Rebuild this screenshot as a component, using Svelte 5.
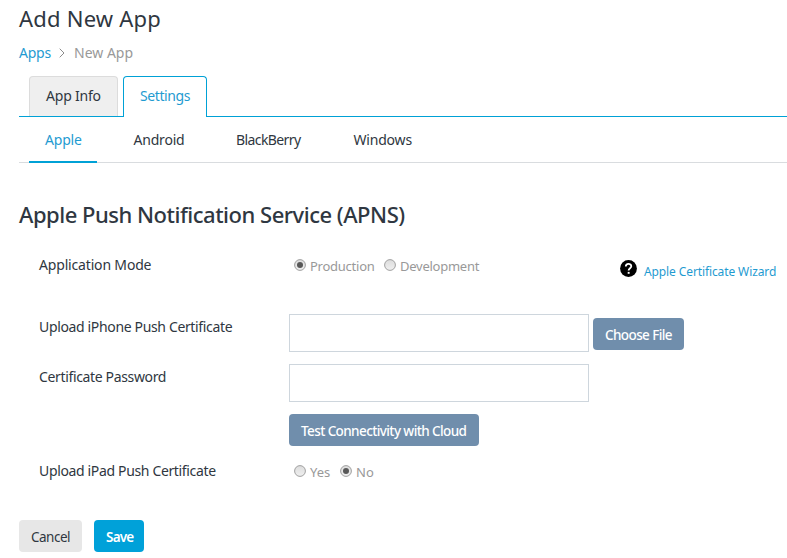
<script>
  let mode = $state('Production');
  let ipad = $state('No');
  let active = $state('Apple');
  const platforms = [
    { name: 'Apple', width: 68 },
    { name: 'Android', width: 82 },
    { name: 'BlackBerry', width: 97 },
    { name: 'Windows', width: 91 },
  ];
</script>

{#snippet radio(label, checked, select, cls)}
  <button class="radio {cls}" role="radio" aria-checked={checked} onclick={select}>
    <svg width="12" height="12" viewBox="0 0 12 12">
      <defs>
        <linearGradient id="face" x1="0" y1="0" x2="0" y2="1">
          <stop offset="0" stop-color="#dcdcdc" />
          <stop offset="1" stop-color="#f0f0f0" />
        </linearGradient>
      </defs>
      <circle cx="6" cy="6" r="5.4" fill="url(#face)" stroke="#a0a0a0" stroke-width="1" />
      {#if checked}<circle cx="6" cy="6" r="3" fill="#585858" />{/if}
    </svg>
    <span>{label}</span>
  </button>
{/snippet}

<main>
  <h1>Add New App</h1>
  <nav class="crumbs">
    <a href="#apps">Apps</a>
    <svg width="6" height="10" viewBox="0 0 6 10"><path d="M0.7 0.7 5 5 0.7 9.3" fill="none" stroke="#8c8c8c" /></svg>
    <span class="current">New App</span>
  </nav>

  <div class="tabs">
    <div class="tab info"><span>App Info</span></div>
    <div class="tab selected"><span>Settings</span></div>
  </div>

  <div class="platforms">
    {#each platforms as p}
      <button class="platform {p.name}" class:on={active === p.name} style="width:{p.width}px" onclick={() => (active = p.name)}>{p.name}</button>
    {/each}
  </div>

  <h2>Apple Push Notification Service (APNS)</h2>

  <div class="form">
    <div class="row mode">
      <span class="label">Application Mode</span>
      <div class="field radios">
        {@render radio('Production', mode === 'Production', () => (mode = 'Production'), 'prod')}
        {@render radio('Development', mode === 'Development', () => (mode = 'Development'), 'dev')}
      </div>
      <a class="wizard" href="#wizard">
        <svg width="17" height="17" viewBox="0 0 17 17">
          <circle cx="8.5" cy="8.5" r="8.4" fill="#000" />
          <path d="M5.8 6.5C5.8 3 11.3 3 11.3 6.3C11.3 8.2 8.6 8.3 8.6 10.6" fill="none" stroke="#fff" stroke-width="1.8" />
          <rect x="7.7" y="11.9" width="1.9" height="1.9" fill="#fff" />
        </svg>
        <span>Apple Certificate Wizard</span>
      </a>
    </div>
    <div class="row">
      <span class="label">Upload iPhone Push Certificate</span>
      <div class="field">
        <input type="text" aria-label="iPhone push certificate" />
        <button class="btn choose"><span>Choose File</span></button>
      </div>
    </div>
    <div class="row">
      <span class="label">Certificate Password</span>
      <div class="field"><input type="password" aria-label="Certificate password" /></div>
    </div>
    <div class="row test-row">
      <span class="label"></span>
      <div class="field"><button class="btn test"><span>Test Connectivity with Cloud</span></button></div>
    </div>
    <div class="row ipad">
      <span class="label">Upload iPad Push Certificate</span>
      <div class="field radios">
        {@render radio('Yes', ipad === 'Yes', () => (ipad = 'Yes'), 'yes')}
        {@render radio('No', ipad === 'No', () => (ipad = 'No'), 'no')}
      </div>
    </div>
  </div>

  <div class="actions">
    <button class="btn cancel"><span>Cancel</span></button>
    <button class="btn save"><span>Save</span></button>
  </div>
</main>

<style>
  :global(body) { background: #fff; overflow: hidden; }
  main {
    box-sizing: border-box;
    height: 558px;
    padding: 3px 0 0 19px;
    font: 400 14px/20px "Noto Sans", sans-serif;
    color: #2f3741;
    white-space: nowrap;
    overflow: hidden;
  }
  button { font: inherit; border: 0; padding: 0; background: none; white-space: nowrap; text-align: left; color: inherit; }
  a { color: #1f9bd1; text-decoration: none; }
  svg { display: block; flex: none; }
  h1 { margin: 0; font-size: 22px; line-height: 30px; font-weight: 400; letter-spacing: 0.22px; }
  .crumbs { display: flex; align-items: center; height: 20px; margin-top: 10px; }
  .crumbs a { width: 40px; letter-spacing: -0.25px; }
  .crumbs svg { margin-right: 9px; }
  .current { color: #999; }
  .tabs { display: flex; gap: 5px; height: 40px; margin-top: 13px; padding-left: 10px; border-bottom: 1px solid #00a1d6; }
  .tab { box-sizing: border-box; padding: 9px 16px 0; border: 1px solid #dcdcdc; border-bottom: 0; border-radius: 4px 4px 0 0; height: 40px; }
  .info { width: 89px; background: #efefef; letter-spacing: -0.2px; }
  .selected { width: 84px; height: 41px; background: #fff; border-color: #00a1d6; color: #1f9bd1; letter-spacing: -0.4px; }
  .platforms { display: flex; gap: 20.5px; height: 45px; padding-left: 10px; border-bottom: 1px solid #d9dcdf; }
  .platform { box-sizing: border-box; height: 46px; padding: 2px 0 1px 16px; border-bottom: 2px solid transparent; letter-spacing: -0.2px; }
  .BlackBerry { letter-spacing: -0.6px; }
  .on { color: #1f9bd1; border-color: #00a1d6; }
  h2 { margin: 36px 0 0; font-size: 22px; line-height: 30px; font-weight: 500; letter-spacing: -0.49px; }
  .form { padding: 25px 0 0 20px; }
  .row { display: flex; height: 50px; }
  .label { width: 250px; flex: none; padding-top: 3px; letter-spacing: -0.35px; }
  .field { display: flex; gap: 4px; }
  input { box-sizing: border-box; width: 300px; height: 38px; border: 1px solid #ced6dd; padding: 0 10px; outline: 0; }
  .mode { height: 60px; }
  .mode .label { padding-top: 1px; letter-spacing: -0.17px; }
  .radios { padding: 2px 0 0 5px; height: 20px; gap: 0; }
  .radio { display: flex; gap: 4px; color: #999; height: 20px; font-size: 13px; letter-spacing: -0.25px; }
  .radio svg { margin-top: 3px; }
  .prod { width: 90px; }
  .yes { width: 46px; letter-spacing: 0; }
  .no { letter-spacing: 0; }
  .wizard { display: flex; gap: 7px; margin: 6px 11px 0 auto; width: 156px; height: 20px; font-size: 12px; letter-spacing: -0.11px; }
  .wizard span { padding-top: 2px; }
  .btn { height: 32px; border-radius: 4px; padding: 2px 12px 0; font-size: 13.5px; font-weight: 500; letter-spacing: -0.6px; }
  .choose, .test { background: #708eac; color: #fff; }
  .choose { width: 91px; margin-top: 4px; }
  .test { width: 190px; }
  .test-row { height: 46px; }
  .ipad { height: 60px; }
  .ipad .label { padding-top: 1px; }
  .actions { display: flex; gap: 12px; }
  .cancel { width: 63px; background: #e7e7e7; font-weight: 400; letter-spacing: -0.5px; }
  .save { width: 50px; background: #00a1d9; color: #fff; font-weight: 600; letter-spacing: -0.8px; }
</style>
